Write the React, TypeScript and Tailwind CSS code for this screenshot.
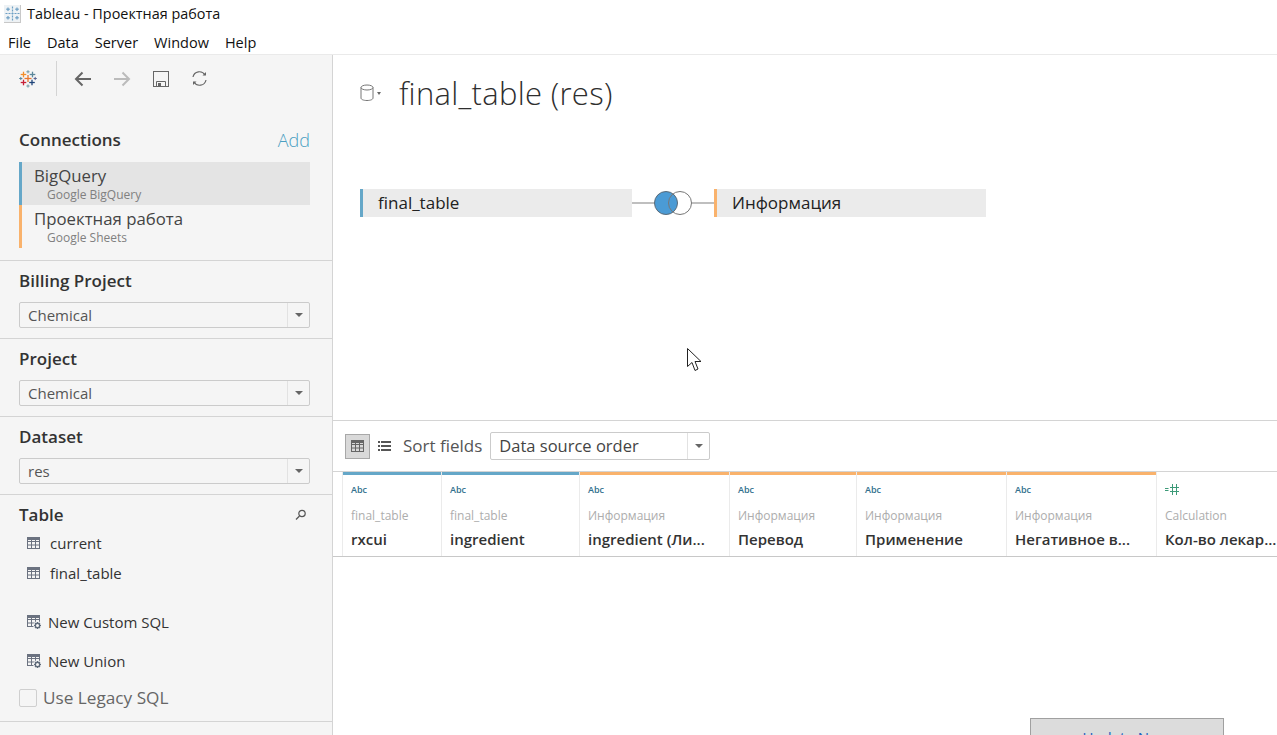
import React from "react";

function Logo() {
  const plus = (x: number, y: number, r: number, c: string, w = 1.6) => (
    <g stroke={c} strokeWidth={w}>
      <line x1={x - r} y1={y} x2={x + r} y2={y} />
      <line x1={x} y1={y - r} x2={x} y2={y + r} />
    </g>
  );
  return (
    <svg width="18" height="18" viewBox="0 0 18 18" className="shrink-0">
      {plus(9, 8.5, 3.5, "#e8762d", 1.3)}
      {plus(4.5, 4.5, 2.8, "#f28e2b", 1.3)}
      {plus(13.5, 4.5, 2.8, "#5b879b", 1.3)}
      {plus(4.5, 12.5, 2.8, "#c72037", 1.3)}
      {plus(13, 12.5, 2.8, "#1f447a", 1.3)}
      {plus(9, 1.8, 1.6, "#7099a6", 1)}
      {plus(1.8, 8.5, 1.6, "#59879b", 1)}
      {plus(16.2, 8.5, 1.6, "#5b6591", 1)}
      {plus(9, 16, 1.6, "#7099a6", 1)}
    </svg>
  );
}

function TitleIcon() {
  return (
    <div className="w-[17px] h-[18px] bg-[#eef2f5] border-r border-b border-[#c8c8c8] flex items-center justify-center">
      <svg width="15" height="15" viewBox="0 0 15 15">
        <g stroke="#6d9fc4" strokeWidth="1.2">
          <line x1="7.5" y1="0.5" x2="7.5" y2="14.5" strokeDasharray="2 1" />
          <line x1="0.5" y1="7.5" x2="14.5" y2="7.5" strokeDasharray="2 1" />
          <line x1="3" y1="1.5" x2="3" y2="5" />
          <line x1="1.2" y1="3.2" x2="4.8" y2="3.2" />
          <line x1="12" y1="1.5" x2="12" y2="5" />
          <line x1="10.2" y1="3.2" x2="13.8" y2="3.2" />
          <line x1="3" y1="10" x2="3" y2="13.5" />
          <line x1="1.2" y1="11.8" x2="4.8" y2="11.8" />
          <line x1="12" y1="10" x2="12" y2="13.5" />
          <line x1="10.2" y1="11.8" x2="13.8" y2="11.8" />
        </g>
      </svg>
    </div>
  );
}

function GridIcon({ color = "#6b7280" }: { color?: string }) {
  return (
    <svg width="13" height="12" viewBox="0 0 13 12" className="shrink-0">
      <rect x="0" y="0" width="13" height="3" fill={color} />
      <rect x="0.5" y="0.5" width="12" height="11" fill="none" stroke={color} />
      <path d="M0 4.5H13M0 8H13M4.5 3V12M8.5 3V12" stroke={color} strokeWidth="1" fill="none" />
    </svg>
  );
}

function GridGearIcon() {
  return (
    <svg width="14" height="15" viewBox="0 0 14 15" className="shrink-0">
      <rect x="0" y="0" width="13" height="3" fill="#6b7280" />
      <rect x="0.5" y="0.5" width="12" height="11" fill="none" stroke="#6b7280" />
      <path d="M0 4.5H13M0 8H13M4.5 3V12M8.5 3V12" stroke="#6b7280" fill="none" />
      <circle cx="10.5" cy="10.5" r="4.2" fill="#f5f5f5" />
      <circle cx="10.5" cy="10.5" r="2.2" fill="none" stroke="#5f6b7a" strokeWidth="1.4" />
      <path d="M10.5 7V8.2M10.5 12.8V14M7 10.5H8.2M12.8 10.5H14M8 8L8.9 8.9M12.1 12.1L13 13M13 8L12.1 8.9M8.9 12.1L8 13" stroke="#5f6b7a" strokeWidth="1.2" />
    </svg>
  );
}

function Select({ label }: { label: string }) {
  return (
    <div className="h-[26px] w-[291px] flex border border-[#cbcbcb] rounded-[2px] bg-[#f5f5f5]">
      <div className="flex-1 pl-2 text-[15px] leading-[24px] text-[#555]">{label}</div>
      <div className="w-[22px] border-l border-[#e2e2e2] flex items-center justify-center">
        <div className="w-0 h-0 border-l-[4px] border-r-[4px] border-t-[4px] border-l-transparent border-r-transparent border-t-[#666]" />
      </div>
    </div>
  );
}

function Section({ title, value }: { title: string; value: string }) {
  return (
    <div className="h-[78px] border-b border-[#d4d4d4] px-[19px]">
      <div className="h-[41px] pb-[2px] flex items-center text-[17px] font-semibold text-[#333]">{title}</div>
      <Select label={value} />
    </div>
  );
}

function Conn({ title, sub, bar, active }: { title: string; sub: string; bar: string; active?: boolean }) {
  return (
    <div className={`h-[43px] flex ${active ? "bg-[#e4e4e4]" : ""}`}>
      <div className={`w-[3px] ${bar}`} />
      <div className="pl-3">
        <div className="text-[16.8px] leading-[24px] mt-[2px] text-[#444]">{title}</div>
        <div className="text-[12px] leading-[14px] pl-[13px] text-[#808080]">{sub}</div>
      </div>
    </div>
  );
}

function CalcIcon() {
  return (
    <svg width="15" height="11" viewBox="0 0 15 11" fill="none" stroke="#3d9a78" strokeWidth="1">
      <path d="M0 4.5H3.5M0 6.5H3.5M5 3.5H14M5 7.5H14M7.5 0V11M11.5 0V11" />
    </svg>
  );
}

function Col({ w, bar, src, name, type = "abc" }: { w: string; bar: string; src: string; name: string; type?: string }) {
  return (
    <div className={`${w} shrink-0 border-r border-[#ebebeb] flex flex-col`}>
      <div className={`h-[3px] ${bar}`} />
      <div className="pl-2 h-[30px] pb-[2px] flex items-center">
        {type === "abc" ? (
          <span className="text-[9px] font-semibold text-[#32708d] leading-none">Abc</span>
        ) : (
          <CalcIcon />
        )}
      </div>
      <div className="pl-2 text-[12px] leading-[16px] mt-[3px] text-[#adadad] whitespace-nowrap">{src}</div>
      <div className="pl-2 text-[15px] leading-[20px] mt-[5px] font-semibold text-[#333] whitespace-nowrap overflow-hidden">{name}</div>
    </div>
  );
}

export default function App() {
  return (
    <div className="w-[1277px] h-[735px] bg-white overflow-hidden relative flex flex-col font-['Open_Sans',sans-serif]">
      <div className="h-[30px] flex items-center pl-[4px] gap-[6px] pb-[2px] text-[14.4px] text-[#111]">
        <TitleIcon />
        <span>Tableau - Проектная работа</span>
      </div>
      <div className="h-[25px] flex items-center pl-2 pt-[2px] gap-[16px] text-[14.5px] text-[#111] border-b border-[#eaeaea]">
        <span>File</span>
        <span>Data</span>
        <span>Server</span>
        <span>Window</span>
        <span>Help</span>
      </div>
      <div className="flex-1 flex min-h-0">
        <aside className="w-[333px] shrink-0 bg-[#f5f5f5] border-r border-[#d4d4d4] flex flex-col">
          <div className="h-[49px] flex items-center pl-[19px] pb-[2px]">
            <Logo />
            <div className="w-px h-[35px] bg-[#d4d4d4] ml-[19px] mr-[17px]" />
            <div className="flex items-center gap-[22px]">
              <svg width="17" height="16" viewBox="0 0 17 16" fill="none" stroke="#666" strokeWidth="2" className="mr-[1px]"><path d="M17 8H2M8.5 1.5L2 8L8.5 14.5" /></svg>
              <svg width="17" height="16" viewBox="0 0 17 16" fill="none" stroke="#bbb" strokeWidth="2"><path d="M0 8H15M8.5 1.5L15 8L8.5 14.5" /></svg>
              <svg width="16" height="16" viewBox="0 0 16 16" fill="none" stroke="#666"><rect x="0.5" y="0.5" width="15" height="15" /><path d="M3.5 15.5V10.5H12.5V15.5" /><rect x="5" y="12" width="3" height="3.5" fill="#666" stroke="none" /></svg>
              <svg width="17" height="17" viewBox="0 0 17 17" fill="none" stroke="#666" strokeWidth="1.2"><path d="M2 7A6.5 6.5 0 0 1 14 5" /><path d="M15 10A6.5 6.5 0 0 1 3 12" /><path d="M11.5 5.5H15V2Z" fill="#666" stroke="none" /><path d="M5.5 11.5H2V15Z" fill="#666" stroke="none" /></svg>
            </div>
          </div>
          <div className="mt-[18px] h-[36px] flex items-center justify-between px-[19px] mr-[3px]">
            <span className="text-[17px] font-semibold text-[#333]">Connections</span>
            <span className="text-[18px] font-light text-[#4a9fc2]">Add</span>
          </div>
          <div className="mt-[4px] ml-[19px] mr-[22px]">
            <Conn title="BigQuery" sub="Google BigQuery" bar="bg-[#65a7c8]" active />
            <Conn title="Проектная работа" sub="Google Sheets" bar="bg-[#f9b26c]" />
          </div>
          <div className="h-[13px] border-b border-[#d4d4d4]" />
          <Section title="Billing Project" value="Chemical" />
          <Section title="Project" value="Chemical" />
          <Section title="Dataset" value="res" />
          <div className="h-[227px] border-b border-[#d4d4d4] px-[19px] flex flex-col">
            <div className="h-[41px] pb-[2px] flex items-center justify-between shrink-0">
              <span className="text-[17px] font-semibold text-[#333]">Table</span>
              <svg width="12" height="12" viewBox="0 0 12 12" fill="none" stroke="#555" strokeWidth="1.2" className="mr-[6px]"><circle cx="7" cy="4.5" r="3.2" /><path d="M4.5 7L1 10.5" /></svg>
            </div>
            <div className="flex items-center h-[30px] pl-2 gap-[10px] text-[15px] text-[#333] -mt-[8px]"><GridIcon />current</div>
            <div className="flex items-center h-[30px] pl-2 gap-[10px] text-[15px] text-[#333]"><GridIcon />final_table</div>
            <div className="flex items-center h-[30px] pl-2 gap-[7px] text-[15px] text-[#333] mt-[19px]"><GridGearIcon />New Custom SQL</div>
            <div className="flex items-center h-[30px] pl-2 gap-[7px] text-[15px] text-[#333] mt-[9px]"><GridGearIcon />New Union</div>
            <div className="flex items-center h-[30px] gap-[6px] text-[17.2px] text-[#666] mt-[7px]">
              <div className="w-[18px] h-[18px] border border-[#cfcfcf] rounded-[2px] bg-[#f5f5f5]" />
              Use Legacy SQL
            </div>
          </div>
        </aside>
        <main className="flex-1 min-w-0 flex flex-col">
          <div className="h-[366px] border-b border-[#d4d4d4] flex flex-col pl-[27px] shrink-0">
            <div className="flex items-center h-[76px] shrink-0">
              <svg width="14" height="18" viewBox="0 0 14 18" fill="none" stroke="#777" className="shrink-0"><ellipse cx="7" cy="3.5" rx="6" ry="2.5" /><path d="M1 3.5V14C1 15.5 3.5 16.5 7 16.5C10.5 16.5 13 15.5 13 14V3.5" /></svg>
              <div className="w-0 h-0 ml-[3px] border-l-[2.5px] border-r-[2.5px] border-t-[3px] border-l-transparent border-r-transparent border-t-[#666]" />
              <h1 className="ml-[18px] text-[31px] tracking-[0.3px] font-light leading-none text-[#2e2e2e]">final_table (res)</h1>
            </div>
            <div className="flex items-center mt-[58px]">
              <div className="w-[272px] h-[28px] bg-[#ebebeb] border-l-[3px] border-[#65a7c8] pl-[15px] text-[17px] leading-[28px] text-[#222]">final_table</div>
              <div className="relative w-[82px] h-[28px] flex items-center">
                <div className="w-full h-[2px] bg-[#bfbfbf]" />
                <svg width="40" height="26" viewBox="0 0 40 26" className="absolute left-[21px] top-[1px]">
                  <circle cx="27" cy="13" r="11.5" fill="#fff" />
                  <circle cx="13" cy="13" r="11.5" fill="#4b9bd5" stroke="#5b6b78" />
                  <circle cx="27" cy="13" r="11.5" fill="none" stroke="#777" />
                </svg>
              </div>
              <div className="w-[272px] h-[28px] bg-[#ebebeb] border-l-[3px] border-[#f9b26c] pl-[15px] text-[17px] leading-[28px] text-[#222]">Информация</div>
            </div>
          </div>
          <div className="h-[51px] border-b border-[#d4d4d4] flex items-center pl-[12px] shrink-0">
            <div className="w-[25px] h-[25px] bg-[#d9d9d9] border border-[#a8a8a8] flex items-center justify-center">
              <GridIcon color="#666" />
            </div>
            <svg width="13" height="12" viewBox="0 0 13 12" className="ml-[8px]" fill="#555"><rect x="0" y="1" width="2" height="2" /><rect x="3" y="1" width="10" height="2" /><rect x="0" y="5" width="2" height="2" /><rect x="3" y="5" width="10" height="2" /><rect x="0" y="9" width="2" height="2" /><rect x="3" y="9" width="10" height="2" /></svg>
            <span className="ml-[12px] text-[17px] text-[#555]">Sort fields</span>
            <div className="ml-[8px] w-[220px] h-[28px] flex border border-[#cbcbcb] rounded-[2px]">
              <div className="flex-1 pl-2 text-[16.5px] leading-[26px] text-[#444]">Data source order</div>
              <div className="w-[22px] border-l border-[#e2e2e2] flex items-center justify-center">
                <div className="w-0 h-0 border-l-[4px] border-r-[4px] border-t-[4px] border-l-transparent border-r-transparent border-t-[#666]" />
              </div>
            </div>
          </div>
          <div className="h-[85px] border-b border-[#c8c8c8] flex shrink-0">
            <div className="w-[10px] border-r border-[#ebebeb] shrink-0" />
            <Col w="w-[99px]" bar="bg-[#65a7c8]" src="final_table" name="rxcui" />
            <Col w="w-[138px]" bar="bg-[#65a7c8]" src="final_table" name="ingredient" />
            <Col w="w-[150px]" bar="bg-[#f9b26c]" src="Информация" name="ingredient (Ли..." />
            <Col w="w-[127px]" bar="bg-[#f9b26c]" src="Информация" name="Перевод" />
            <Col w="w-[150px]" bar="bg-[#f9b26c]" src="Информация" name="Применение" />
            <Col w="w-[150px]" bar="bg-[#f9b26c]" src="Информация" name="Негативное в..." />
            <Col w="w-[121px]" bar="" src="Calculation" name="Кол-во лекар..." type="calc" />
          </div>
        </main>
      </div>
      <svg width="16" height="25" viewBox="0 0 16 25" className="absolute left-[687px] top-[348px]">
        <path d="M0.5 0.5V18.5L5 14.5L8 22.5L11 21L8 13.5H14Z" fill="#fff" stroke="#222" />
      </svg>
      <div className="absolute left-[1030px] top-[718px] w-[194px] h-[34px] bg-[#dcdcdc] border border-[#a0a0a0] text-center text-[15px] leading-[28px] text-[#1f5fbf] pt-[4px] pr-[2px]">Update Now</div>
    </div>
  );
}
